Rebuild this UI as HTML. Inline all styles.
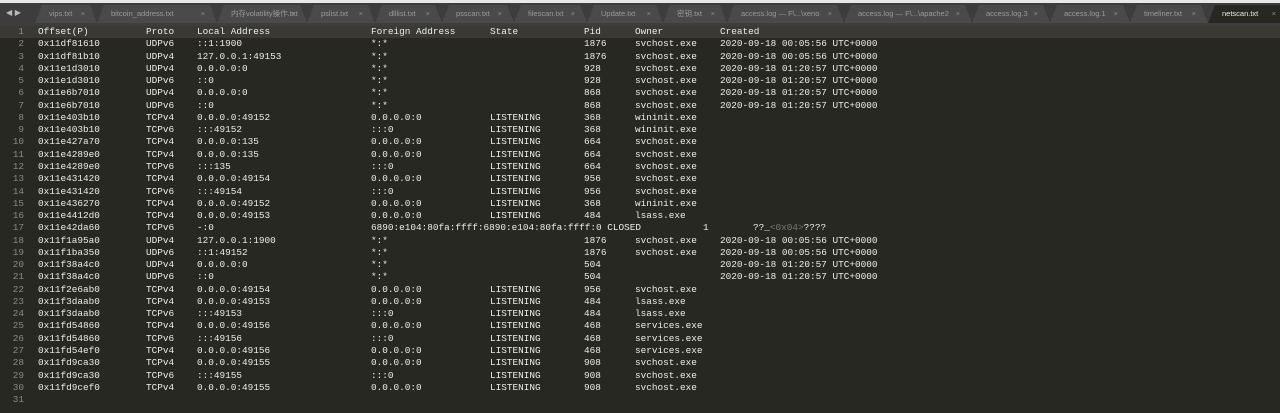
<!DOCTYPE html>
<html><head><meta charset="utf-8"><style>
*{margin:0;padding:0;box-sizing:border-box}
body{width:1280px;height:413px;background:#272822;overflow:hidden;position:relative;font-family:"Liberation Mono","Noto Sans CJK SC",monospace;}
#top{position:absolute;left:0;top:0;width:1280px;height:3px;background:#e8e8e8}
#bar{position:absolute;left:0;top:3px;width:1280px;height:23px;background:#3d3d3d}
.tab{position:absolute;top:5px;height:18px;background:#4a4a4a;color:#9a9a9a;font:7.5px "Liberation Sans","Noto Sans CJK SC",sans-serif;line-height:18px;padding-left:14px;clip-path:polygon(7px 0,calc(100% - 7px) 0,100% 100%,0 100%)}
.tab b{font-weight:normal;position:absolute;right:12px;color:#8a8a8a}
.tab.act{background:#272822;color:#e8e8e8}
#arr{position:absolute;left:6px;top:8px;color:#bbb;font:8px "DejaVu Sans",sans-serif}
.row{position:absolute;left:0;height:12.27px;width:1280px;font-size:9.4px;line-height:12.27px;color:#ececec;white-space:pre}
.row span{position:absolute}
.n{color:#8a8a80;width:24px;text-align:right;left:0}
.hl{background:#3a3a33}
</style></head><body>
<div id="top"></div><div id="bar"></div>
<div id="arr">◀ ▶</div>
<div class="tab" style="left:35px;width:62px">vips.txt<b>×</b></div>
<div class="tab" style="left:97px;width:120px">bitcoin_address.txt<b>×</b></div>
<div class="tab" style="left:217px;width:90px">内存volatility操作.txt<b>×</b></div>
<div class="tab" style="left:307px;width:68px">pslist.txt<b>×</b></div>
<div class="tab" style="left:375px;width:67px">dlllist.txt<b>×</b></div>
<div class="tab" style="left:442px;width:72px">psscan.txt<b>×</b></div>
<div class="tab" style="left:514px;width:73px">filescan.txt<b>×</b></div>
<div class="tab" style="left:587px;width:76px">Update.txt<b>×</b></div>
<div class="tab" style="left:663px;width:64px">密钥.txt<b>×</b></div>
<div class="tab" style="left:727px;width:117px">access.log — F\...\xeno<b>×</b></div>
<div class="tab" style="left:844px;width:128px">access.log — F\...\apache2<b>×</b></div>
<div class="tab" style="left:972px;width:78px">access.log.3<b>×</b></div>
<div class="tab" style="left:1050px;width:80px">access.log.1<b>×</b></div>
<div class="tab" style="left:1130px;width:78px">timeliner.txt<b>×</b></div>
<div class="tab act" style="left:1208px;width:80px">netscan.txt<b>×</b></div>
<div id="rows"></div>
<script>
var d=[
["Offset(P)","Proto","Local Address","Foreign Address","State","Pid","Owner","Created"],
["0x11df81610","UDPv6","::1:1900","*:*","","1876","svchost.exe","2020-09-18 00:05:56 UTC+0000"],
["0x11df81b10","UDPv4","127.0.0.1:49153","*:*","","1876","svchost.exe","2020-09-18 00:05:56 UTC+0000"],
["0x11e1d3010","UDPv4","0.0.0.0:0","*:*","","928","svchost.exe","2020-09-18 01:20:57 UTC+0000"],
["0x11e1d3010","UDPv6","::0","*:*","","928","svchost.exe","2020-09-18 01:20:57 UTC+0000"],
["0x11e6b7010","UDPv4","0.0.0.0:0","*:*","","868","svchost.exe","2020-09-18 01:20:57 UTC+0000"],
["0x11e6b7010","UDPv6","::0","*:*","","868","svchost.exe","2020-09-18 01:20:57 UTC+0000"],
["0x11e403b10","TCPv4","0.0.0.0:49152","0.0.0.0:0","LISTENING","368","wininit.exe",""],
["0x11e403b10","TCPv6",":::49152",":::0","LISTENING","368","wininit.exe",""],
["0x11e427a70","TCPv4","0.0.0.0:135","0.0.0.0:0","LISTENING","664","svchost.exe",""],
["0x11e4289e0","TCPv4","0.0.0.0:135","0.0.0.0:0","LISTENING","664","svchost.exe",""],
["0x11e4289e0","TCPv6",":::135",":::0","LISTENING","664","svchost.exe",""],
["0x11e431420","TCPv4","0.0.0.0:49154","0.0.0.0:0","LISTENING","956","svchost.exe",""],
["0x11e431420","TCPv6",":::49154",":::0","LISTENING","956","svchost.exe",""],
["0x11e436270","TCPv4","0.0.0.0:49152","0.0.0.0:0","LISTENING","368","wininit.exe",""],
["0x11e4412d0","TCPv4","0.0.0.0:49153","0.0.0.0:0","LISTENING","484","lsass.exe",""],
null,
["0x11f1a95a0","UDPv4","127.0.0.1:1900","*:*","","1876","svchost.exe","2020-09-18 00:05:56 UTC+0000"],
["0x11f1ba350","UDPv6","::1:49152","*:*","","1876","svchost.exe","2020-09-18 00:05:56 UTC+0000"],
["0x11f38a4c0","UDPv4","0.0.0.0:0","*:*","","504","","2020-09-18 01:20:57 UTC+0000"],
["0x11f38a4c0","UDPv6","::0","*:*","","504","","2020-09-18 01:20:57 UTC+0000"],
["0x11f2e6ab0","TCPv4","0.0.0.0:49154","0.0.0.0:0","LISTENING","956","svchost.exe",""],
["0x11f3daab0","TCPv4","0.0.0.0:49153","0.0.0.0:0","LISTENING","484","lsass.exe",""],
["0x11f3daab0","TCPv6",":::49153",":::0","LISTENING","484","lsass.exe",""],
["0x11fd54860","TCPv4","0.0.0.0:49156","0.0.0.0:0","LISTENING","468","services.exe",""],
["0x11fd54860","TCPv6",":::49156",":::0","LISTENING","468","services.exe",""],
["0x11fd54ef0","TCPv4","0.0.0.0:49156","0.0.0.0:0","LISTENING","468","services.exe",""],
["0x11fd9ca30","TCPv4","0.0.0.0:49155","0.0.0.0:0","LISTENING","908","svchost.exe",""],
["0x11fd9ca30","TCPv6",":::49155",":::0","LISTENING","908","svchost.exe",""],
["0x11fd9cef0","TCPv4","0.0.0.0:49155","0.0.0.0:0","LISTENING","908","svchost.exe",""],
[]
];
var X=[38,146,197,371,490,584,635,720],h="";
function esc(s){return s.replace(/&/g,"&amp;").replace(/</g,"&lt;")}
d.forEach(function(r,i){
 var top=26+i*12.27;
 h+='<div class="row'+(i==0?' hl':'')+'" style="top:'+top+'px"><span class="n">'+(i+1)+'</span>';
 if(r===null){
  h+='<span style="left:38px">0x11e42da60</span><span style="left:146px">TCPv6</span><span style="left:197px">-:0</span><span style="left:371px">6890:e104:80fa:ffff:6890:e104:80fa:ffff:0 CLOSED</span><span style="left:703px">1</span><span style="left:753px">??_<span style="position:static;color:#777">&lt;0x04&gt;</span>????</span>';
 } else r.forEach(function(c,j){ if(c) h+='<span style="left:'+X[j]+'px">'+esc(c)+'</span>'; });
 h+='</div>';
});
document.getElementById('rows').innerHTML=h;
</script>
</body></html>
